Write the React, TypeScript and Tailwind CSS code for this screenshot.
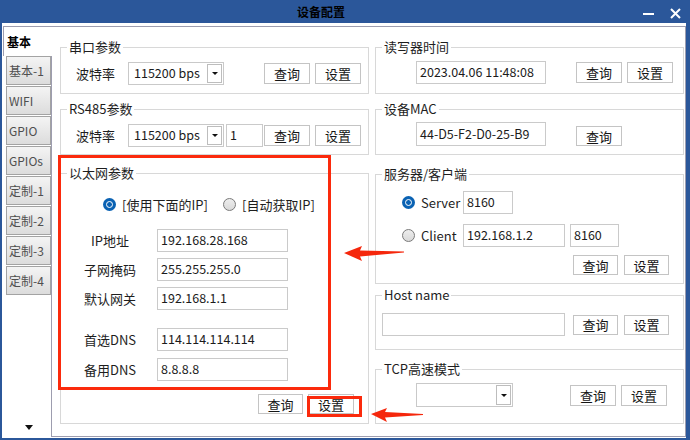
import React from 'react';

const Btn: React.FC<{ label: string; className?: string }> = ({ label, className = '' }) => (
  <div
    className={`flex shrink-0 items-center justify-center border border-[#c4c4c4] bg-white text-[13px] leading-none text-[#151515] ${className}`}
  >
    {label}
  </div>
);

const Field: React.FC<{ value?: string; className?: string }> = ({ value = '', className = '' }) => (
  <div
    className={`flex shrink-0 items-center border border-[#cacaca] bg-white pl-[3px] text-[12.5px] leading-none text-[#1b1b1b] ${className}`}
  >
    {value}
  </div>
);

const Select: React.FC<{ value?: string; className?: string }> = ({ value = '', className = '' }) => (
  <div className={`flex shrink-0 items-stretch justify-between border border-[#c9c9c9] bg-white ${className}`}>
    <span className="self-center pl-[5px] text-[12.5px] leading-none text-[#1b1b1b]">{value}</span>
    <div className="my-[1px] mr-[1px] flex w-[15px] items-center justify-center border border-[#bdbdbd] bg-white">
      <svg width="6" height="3" viewBox="0 0 6 3">
        <polygon points="0,0 6,0 3,3" fill="#111" />
      </svg>
    </div>
  </div>
);

const Radio: React.FC<{ checked?: boolean }> = ({ checked }) =>
  checked ? (
    <div className="flex h-[13px] w-[13px] shrink-0 items-center justify-center rounded-full bg-[#0a62b3]">
      <div className="h-[7px] w-[7px] rounded-full border-[1.5px] border-white bg-[#0a62b3]" />
    </div>
  ) : (
    <div className="h-[13px] w-[13px] shrink-0 rounded-full border border-[#7a7a7a] bg-gradient-to-b from-[#ededed] to-[#d9d9d9]" />
  );

const Group: React.FC<{ title: string; className?: string; children?: React.ReactNode }> = ({
  title,
  className = '',
  children,
}) => (
  <div className={`relative w-[309px] border border-[#d8d8d8] ${className}`}>
    <span className="absolute left-[6px] top-[-10px] bg-white px-[2px] text-[13px] leading-[18px] text-[#1e1e1e]">
      {title}
    </span>
    {children}
  </div>
);

const FormRow: React.FC<{ label: string; value: string; className?: string }> = ({ label, value, className = '' }) => (
  <div className={`ml-[15px] flex items-center ${className}`}>
    <span className="w-[68px] text-center text-[13px] leading-none text-[#1e1e1e]">{label}</span>
    <Field value={value} className="ml-[13px] h-[23px] w-[131px]" />
  </div>
);

const TABS = ['基本-1', 'WIFI', 'GPIO', 'GPIOs', '定制-1', '定制-2', '定制-3', '定制-4'];

export default function App() {
  return (
    <div className="relative flex h-[440px] w-[690px] flex-col overflow-hidden bg-[#2b579a] font-['Noto_Sans_CJK_SC','Noto_Sans',sans-serif]">
      {/* title bar */}
      <div className="flex h-[23px] shrink-0 items-center">
        <span className="ml-[297px] text-[12px] font-bold leading-none text-black">设备配置</span>
        <div className="ml-auto mr-[9px] mt-[3px] flex items-center gap-[16px]">
          <svg width="11" height="11" viewBox="0 0 11 11">
            <rect x="0" y="5" width="11" height="2" fill="#fff" />
          </svg>
          <svg width="11" height="11" viewBox="0 0 11 11">
            <path d="M1 1 L10 10 M10 1 L1 10" stroke="#fff" strokeWidth="2" />
          </svg>
        </div>
      </div>

      {/* body */}
      <div className="mb-[2px] ml-[2px] mr-[4px] flex flex-1 bg-white pt-[3px]">
        {/* tab strip */}
        <div className="flex w-[50px] shrink-0 flex-col">
          <div className="ml-[1px] flex h-[30px] w-[49px] items-center border-l border-t border-[#9d9daf] pl-[3px] text-[12px] font-bold leading-none text-black">
            基本
          </div>
          <div className="mb-[1px] flex flex-1 flex-col border-r border-[#9d9daf]">
            {TABS.map((t) => (
              <div
                key={t}
                className="mb-[1px] ml-[4px] flex h-[29px] w-[45px] items-center border border-[#a3a3a3] bg-gradient-to-b from-[#f4f4f4] to-[#dcdcdc] pl-[2px] text-[12px] leading-none text-[#4f4f4f]"
              >
                {t}
              </div>
            ))}
            <div className="mb-[7px] mt-auto flex justify-center pl-[4px]">
              <svg width="8" height="5" viewBox="0 0 8 5">
                <polygon points="0,0 8,0 4,5" fill="#111" />
              </svg>
            </div>
          </div>
        </div>

        {/* panel */}
        <div className="mb-[1px] flex flex-1 border-b border-r border-t border-[#9d9daf] pl-[8px] pr-[1px]">
          {/* left column */}
          <div className="flex w-[309px] flex-col">
            <Group title="串口参数" className="mt-[20px] h-[47px] pl-[15px] pt-[14px]">
              <div className="flex items-center">
                <span className="w-[52px] text-[13px] leading-none text-[#1e1e1e]">波特率</span>
                <Select value="115200 bps" className="h-[23px] w-[96px]" />
                <Btn label="查询" className="ml-[40px] h-[21px] w-[46px]" />
                <Btn label="设置" className="ml-[5px] h-[21px] w-[46px]" />
              </div>
            </Group>

            <Group title="RS485参数" className="mt-[15px] h-[46px] pl-[15px] pt-[14px]">
              <div className="flex items-center">
                <span className="w-[52px] text-[13px] leading-none text-[#1e1e1e]">波特率</span>
                <Select value="115200 bps" className="h-[23px] w-[96px]" />
                <Field value="1" className="ml-[2px] h-[23px] w-[37px]" />
                <Btn label="查询" className="ml-[1px] h-[21px] w-[46px]" />
                <Btn label="设置" className="ml-[5px] h-[21px] w-[46px]" />
              </div>
            </Group>

            <Group title="以太网参数" className="mt-[18px] flex h-[251px] flex-col pt-[22px]">
              <div className="ml-[42px] flex h-[17px] items-center text-[13px] leading-none text-[#1e1e1e]">
                <div className="flex w-[120px] items-center">
                  <Radio checked />
                  <span className="ml-[6px]">[使用下面的IP]</span>
                </div>
                <Radio />
                <span className="ml-[6px]">[自动获取IP]</span>
              </div>
              <FormRow label="IP地址" value="192.168.28.168" className="mt-[16px]" />
              <FormRow label="子网掩码" value="255.255.255.0" className="mt-[6px]" />
              <FormRow label="默认网关" value="192.168.1.1" className="mt-[6px]" />
              <FormRow label="首选DNS" value="114.114.114.114" className="mt-[18px]" />
              <FormRow label="备用DNS" value="8.8.8.8" className="mt-[7px]" />
              <div className="mt-[13px] flex justify-end pr-[14px]">
                <Btn label="查询" className="h-[20px] w-[45px]" />
                <Btn label="设置" className="ml-[5px] h-[20px] w-[46px]" />
              </div>
            </Group>
          </div>

          {/* right column */}
          <div className="ml-[6px] flex w-[309px] flex-col">
            <Group title="读写器时间" className="mt-[20px] h-[47px] pl-[40px] pt-[13px]">
              <div className="flex items-center">
                <Field value="2023.04.06 11:48:08" className="h-[23px] w-[130px]" />
                <Btn label="查询" className="ml-[30px] h-[21px] w-[46px]" />
                <Btn label="设置" className="ml-[5px] h-[21px] w-[46px]" />
              </div>
            </Group>

            <Group title="设备MAC" className="mt-[15px] h-[46px] pl-[40px] pt-[12px]">
              <div className="flex items-end">
                <Field value="44-D5-F2-D0-25-B9" className="h-[24px] w-[130px]" />
                <Btn label="查询" className="ml-[30px] h-[20px] w-[46px]" />
              </div>
            </Group>

            <Group title="服务器/客户端" className="mt-[19px] flex h-[110px] flex-col pt-[16px]">
              <div className="ml-[26px] flex items-center text-[13px] leading-none text-[#1e1e1e]">
                <Radio checked />
                <span className="ml-[6px] w-[36px]">Server</span>
                <Field value="8160" className="ml-[6px] h-[23px] w-[50px]" />
              </div>
              <div className="ml-[26px] mt-[10px] flex items-center text-[13px] leading-none text-[#1e1e1e]">
                <Radio />
                <span className="ml-[6px] w-[36px]">Client</span>
                <Field value="192.168.1.2" className="ml-[6px] h-[23px] w-[102px]" />
                <Field value="8160" className="ml-[5px] h-[23px] w-[49px]" />
              </div>
              <div className="mt-[8px] flex justify-end pr-[14px]">
                <Btn label="查询" className="h-[20px] w-[45px]" />
                <Btn label="设置" className="ml-[6px] h-[20px] w-[45px]" />
              </div>
            </Group>

            <Group title="Host name" className="mt-[11px] h-[55px] pl-[6px] pt-[17px]">
              <div className="flex items-center">
                <Field className="h-[23px] w-[183px]" />
                <Btn label="查询" className="ml-[8px] h-[20px] w-[45px]" />
                <Btn label="设置" className="ml-[6px] h-[20px] w-[45px]" />
              </div>
            </Group>

            <Group title="TCP高速模式" className="mt-[19px] h-[55px] pl-[40px] pt-[13px]">
              <div className="flex items-center">
                <Select className="h-[24px] w-[97px]" />
                <Btn label="查询" className="ml-[57px] h-[21px] w-[46px]" />
                <Btn label="设置" className="ml-[5px] h-[21px] w-[46px]" />
              </div>
            </Group>
          </div>
        </div>
      </div>

      {/* annotation overlays */}
      <div className="pointer-events-none absolute left-[58px] top-[155px] h-[235px] w-[273px] border-[3px] border-[#fb2a0c]" />
      <div className="pointer-events-none absolute left-[307px] top-[396px] h-[21px] w-[55px] border-[3px] border-[#fb2a0c]" />
      <svg className="pointer-events-none absolute left-[343px] top-[244px]" width="62" height="18" viewBox="0 0 62 18">
        <polygon points="1,9 19,2 17,6.5 61,7.5 61,8.5 17,12.5 19,17" fill="#f5270c" />
      </svg>
      <svg className="pointer-events-none absolute left-[370px] top-[406px]" width="54" height="17" viewBox="0 0 54 17">
        <polygon points="1,8 17,2 15,6 53,8 53,9 15,11.5 17,16" fill="#f5270c" />
      </svg>
    </div>
  );
}
